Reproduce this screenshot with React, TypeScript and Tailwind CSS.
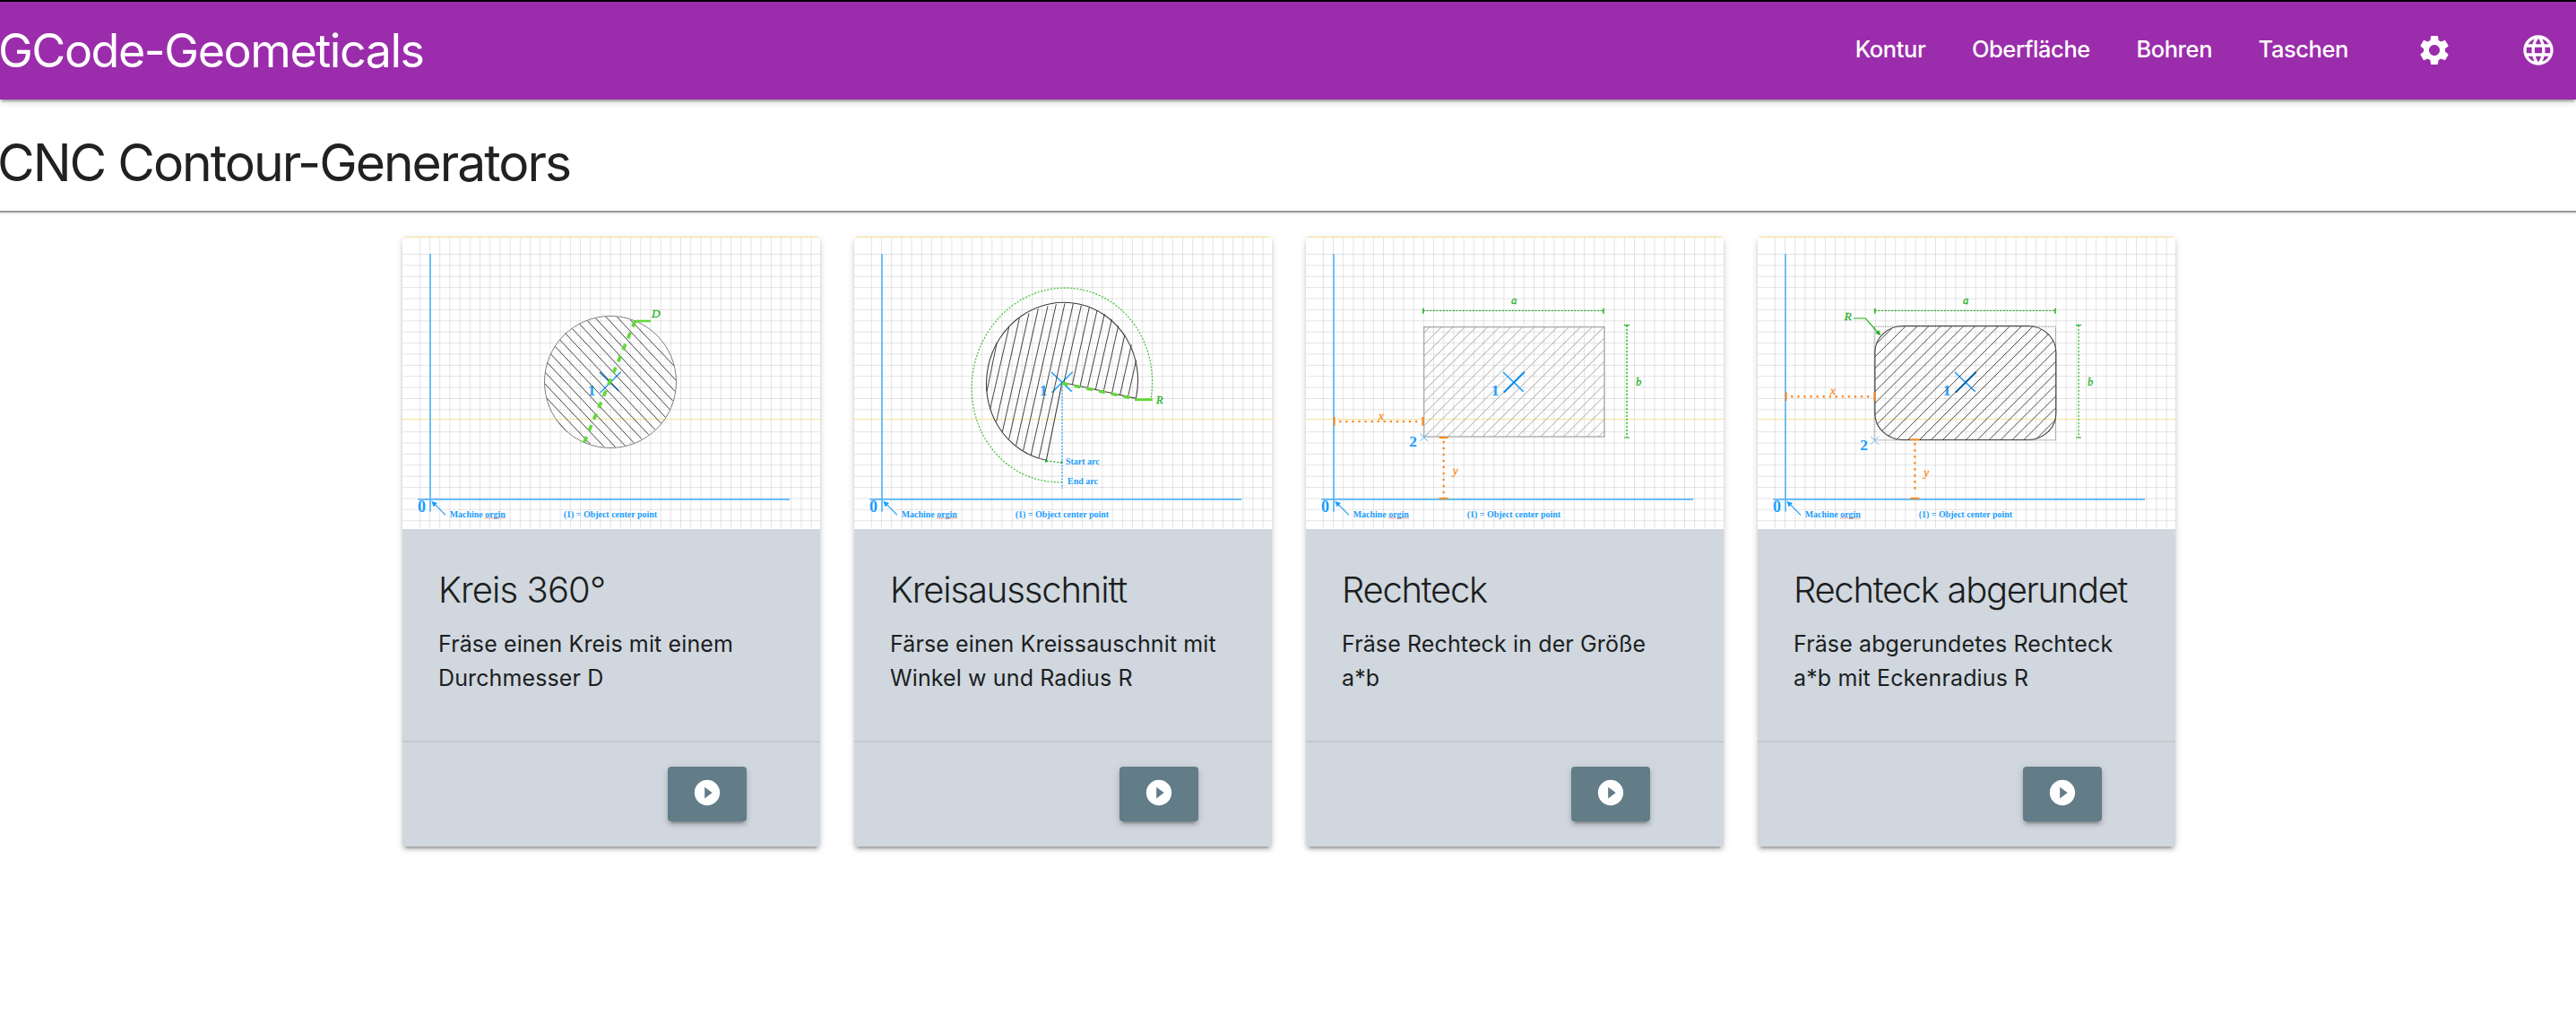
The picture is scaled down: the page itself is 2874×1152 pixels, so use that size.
import React from "react";
import { MdLanguage, MdPlayCircleFilled, MdSettings } from "react-icons/md";

const BLUE = "#1a9dfc";
const GREEN = "#22b11f";
const LIME = "#62d836";
const ORANGE = "#fb8a1c";

const navItems = ["Kontur", "Oberfläche", "Bohren", "Taschen"];

type Segment = [number, number, number, number];

function Segments({ items, stroke, width = 3 }: { items: Segment[]; stroke: string; width?: number }) {
  return (
    <g stroke={stroke} strokeWidth={width}>
      {items.map(([x1, y1, x2, y2], i) => (
        <line key={i} x1={x1} y1={y1} x2={x2} y2={y2} />
      ))}
    </g>
  );
}

function Label({
  x,
  y,
  size = 29.9,
  fill = BLUE,
  italic = false,
  children,
}: {
  x: number;
  y: number;
  size?: number;
  fill?: string;
  italic?: boolean;
  children: React.ReactNode;
}) {
  return (
    <text
      x={x}
      y={y}
      fontSize={size}
      fill={fill}
      stroke={italic ? fill : "none"}
      strokeWidth={italic ? 0.8 : 0}
      fontFamily="'Liberation Serif', 'Times New Roman', serif"
      fontWeight={italic ? 400 : 700}
      fontStyle={italic ? "italic" : "normal"}
    >
      {children}
    </text>
  );
}

const columns = Array.from({ length: 40 }, (_, i) => 85 + i * 33.6);
const rows = Array.from({ length: 25 }, (_, i) => 85.5 + i * 37.15).filter((_, i) => i !== 15);

/* Grid paper, machine axes and captions shared by all drawings */
function Sheet({ children }: { children: React.ReactNode }) {
  return (
    <svg viewBox="27 27 1398 978" className="block h-[326px] w-[466px] bg-white">
      <g stroke="#000000" strokeOpacity="0.11" strokeWidth="3">
        {columns.map((x) => (
          <line key={x} x1={x} y1="27" x2={x} y2="1001" />
        ))}
        {rows.map((y) => (
          <line key={y} x1="27" y1={y} x2="1425" y2={y} />
        ))}
      </g>
      <g stroke="#000000" strokeOpacity="0.12" strokeWidth="1.5" strokeDasharray="2 9">
        <path d="M32 30L120 92M27 36L90 80M1420 30L1335 92M1425 36L1360 80" fill="none" />
      </g>
      <g stroke="#f7e294" strokeWidth="3">
        <line x1="27" y1="28.5" x2="1425" y2="28.5" />
        <line x1="27" y1="637.5" x2="1425" y2="637.5" />
      </g>
      <g stroke="#55b5f7" strokeWidth="5">
        <line x1="120" y1="85" x2="120" y2="947" />
        <line x1="79" y1="905.5" x2="1323" y2="905.5" />
      </g>
      <line x1="171" y1="958" x2="136" y2="923" stroke={BLUE} strokeWidth="3.5" />
      <path d="M124 911L144 918L131 931Z" fill={BLUE} />
      <Label x={78} y={949} size={54}>0</Label>
      <Label x={185} y={966}>Machine orgin</Label>
      <line x1="303" y1="968.5" x2="371" y2="968.5" stroke="#f0504a" strokeWidth="2.5" strokeDasharray="3 2" />
      <Label x={566} y={966}>(1) = Object center point</Label>
      {children}
    </svg>
  );
}

function CenterMark({ dark = false, shade }: { dark?: boolean; shade?: string }) {
  return (
    <>
      <g stroke={BLUE} strokeWidth="4.5">
        <line x1="687" y1="480" x2={dark ? 751 : 755} y2={dark ? 543 : 545} />
        <line x1="689" y1="548" x2="758" y2="479" strokeWidth={shade ? 6 : 4.5} />
      </g>
      {shade && <line x1="690" y1="548" x2="759" y2="480" stroke={shade} strokeWidth="4" />}
      <Label x={648} y={558} size={50}>1</Label>
    </>
  );
}

const circleHatch: Segment[] = [
  [790, 305, 936, 459], [745, 295, 942, 507], [706, 293, 940, 545], [672, 298, 932, 576],
  [645, 307, 922, 605], [619, 318, 908, 632], [595, 334, 893, 652], [572, 350, 872, 672],
  [553, 371, 851, 689], [537, 393, 828, 704], [522, 418, 801, 716], [511, 447, 773, 727],
  [505, 481, 740, 731], [503, 518, 702, 730], [508, 565, 655, 720], [545, 643, 578, 680],
];

function CircleDrawing() {
  return (
    <Sheet>
      <CenterMark dark />
      <Segments items={circleHatch} stroke="#444444" />
      <circle cx="723" cy="513" r="220.5" fill="none" stroke="#808080" strokeWidth="3" />
      <line x1="687" y1="480" x2="751" y2="543" stroke="#0b4f8a" strokeWidth="3" />
      <line x1="806" y1="309" x2="858" y2="309" stroke={LIME} strokeWidth="8" />
      <line x1="806" y1="309" x2="635" y2="716" stroke={LIME} strokeWidth="11" strokeDasharray="21 21" />
      <Label x={861} y={297} size={40} fill={GREEN} italic>D</Label>
    </Sheet>
  );
}

const sectorHatch: Segment[] = [
  [505, 380, 471, 545], [545, 330, 482, 603], [580, 300, 503, 645], [612, 283, 523, 680],
  [643, 268, 545, 704], [675, 259, 569, 725], [703, 253, 593, 742], [732, 250, 619, 757],
  [760, 251, 645, 767], [787, 257, 729, 514], [814, 263, 757, 522], [840, 273, 783, 527],
  [865, 285, 808, 533], [889, 303, 835, 538], [911, 325, 862, 543], [933, 353, 890, 549],
  [955, 388, 917, 555], [971, 440, 944, 560],
];

function SectorDrawing() {
  return (
    <Sheet>
      <CenterMark />
      <Segments items={sectorHatch} stroke="#444444" />
      <path
        d="M723 514L670 775A253 267 12 1 1 970 568Z"
        fill="none"
        stroke="#3a3a3a"
        strokeWidth="3.2"
      />
      <path
        d="M723 848A301 326 12 1 1 1019 575"
        fill="none"
        stroke="#3cc035"
        strokeWidth="3.6"
        strokeDasharray="6 5"
      />
      <path d="M670 777L723 783" stroke={GREEN} strokeWidth="4" strokeDasharray="6 6" />
      <path d="M666 770L677 777L667 784ZM724 775L715 782L724 788Z" fill={GREEN} />
      <line x1="723" y1="516" x2="723" y2="870" stroke="#3aa9fb" strokeWidth="4" strokeDasharray="6 5" />
      <line x1="723" y1="517" x2="968" y2="570" stroke={LIME} strokeWidth="10" strokeDasharray="21 21" />
      <line x1="966" y1="572" x2="1025" y2="572" stroke={LIME} strokeWidth="8" />
      <Label x={1038} y={585} size={37} fill={GREEN} italic>R</Label>
      <Label x={735} y={790}>Start arc</Label>
      <Label x={741} y={855}>End arc</Label>
    </Sheet>
  );
}

function SizeMarks({ soft = false }: { soft?: boolean }) {
  return (
    <>
      <g stroke={GREEN} strokeWidth="3.5">
        <line x1="419" y1="274.5" x2="1023" y2="274.5" strokeWidth="3" strokeDasharray="7 4" />
        <path d="M419.5 266V284M1023 266V284" strokeWidth="4.5" />
        <line x1="1101" y1="323" x2="1101" y2="699" stroke="#4fc74a" strokeWidth={soft ? 4.5 : 5.5} strokeDasharray="7 5" />
        <path d="M1092 323H1110M1092 699H1110" />
      </g>
      <Label x={714} y={251} size={38} fill={GREEN} italic>a</Label>
      <Label x={1131} y={524} size={38} fill={GREEN} italic>b</Label>
    </>
  );
}

/* Dotted distances from the axes to the reference corner */
function OffsetMarks({ rowY, colX, top, labelY, yLabel }: { rowY: number; colX: number; top: number; labelY: number; yLabel: number }) {
  return (
    <>
      <g stroke={ORANGE} strokeLinecap="round" strokeWidth="8">
        <line x1="142" y1={rowY} x2="402" y2={rowY} strokeDasharray="0 21.2" />
        <line x1={colX} y1={top + 15} x2={colX} y2="885" strokeDasharray="0 21" />
      </g>
      <g stroke={ORANGE} strokeWidth="6">
        <path d={`M122 ${rowY - 15}V${rowY + 14}M418 ${rowY - 15}V${rowY + 14}`} />
        <path d={`M${colX - 15} ${top}H${colX + 15}M${colX - 15} 902H${colX + 15}`} />
      </g>
      <Label x={270} y={labelY} size={40} fill={ORANGE} italic>x</Label>
      <Label x={colX + 30} y={yLabel} size={40} fill={ORANGE} italic>y</Label>
    </>
  );
}

function hatchLines(from: number, count: number): Segment[] {
  return Array.from({ length: count }, (_, k) => {
    const sum = from + k * 38.8;
    return [sum - 300, 300, sum - 730, 730] as Segment;
  });
}

function RectDrawing() {
  return (
    <Sheet>
      <clipPath id="rect-area">
        <rect x="422" y="329" width="604" height="367" />
      </clipPath>
      <g clipPath="url(#rect-area)">
        <Segments items={hatchLines(771, 25)} stroke="#a8a8a8" />
      </g>
      <rect x="422" y="329" width="604" height="367" fill="none" stroke="#aaaaaa" strokeWidth="4" />
      <CenterMark shade="#0b84dd" />
      <path d="M409 685L435 711M435 685L409 711" stroke="#5cb8fb" strokeWidth="3" />
      <Label x={373} y={730} size={52}>2</Label>
      <SizeMarks />
      <OffsetMarks rowY={645} colX={488} top={699} labelY={638} yLabel={823} />
    </Sheet>
  );
}

function RoundedDrawing() {
  return (
    <Sheet>
      <clipPath id="rounded-area">
        <rect x="419" y="325.5" width="606" height="381" rx="95" ry="88" />
      </clipPath>
      <CenterMark shade="#0b78c8" />
      <g clipPath="url(#rounded-area)">
        <Segments items={hatchLines(809.5, 24)} stroke="#4c4c4c" />
      </g>
      <rect x="417.5" y="327.5" width="607" height="380" fill="none" stroke="#555555" strokeWidth="2.5" strokeDasharray="3 3" />
      <rect x="419.5" y="325.5" width="606" height="381" rx="95" ry="88" fill="none" stroke="#444444" strokeWidth="3.5" />
      <line x1="689" y1="548" x2="758" y2="479" stroke="#0a4272" strokeWidth="3" />
      <path d="M405 695L432 722M432 695L405 722" stroke="#5cb8fb" strokeWidth="3" />
      <Label x={370} y={740} size={52}>2</Label>
      <path d="M348 300H388L430 348" fill="none" stroke={GREEN} strokeWidth="3.5" />
      <path d="M439 358L421 350L433 339Z" fill={GREEN} />
      <Label x={317} y={307} size={39} fill={GREEN} italic>R</Label>
      <SizeMarks soft />
      <OffsetMarks rowY={562} colX={553} top={706} labelY={556} yLabel={828} />
    </Sheet>
  );
}

const cards = [
  {
    title: "Kreis 360°",
    tracking: "tracking-[-0.9px]",
    lines: ["Fräse einen Kreis mit einem", "Durchmesser D"],
    Drawing: CircleDrawing,
  },
  {
    title: "Kreisausschnitt",
    tracking: "tracking-[-1.15px]",
    lines: ["Färse einen Kreissauschnit mit", "Winkel w und Radius R"],
    Drawing: SectorDrawing,
  },
  {
    title: "Rechteck",
    tracking: "tracking-[-1.3px]",
    lines: ["Fräse Rechteck in der Größe", "a*b"],
    Drawing: RectDrawing,
  },
  {
    title: "Rechteck abgerundet",
    tracking: "tracking-[-1.33px]",
    lines: ["Fräse abgerundetes Rechteck", "a*b mit Eckenradius R"],
    Drawing: RoundedDrawing,
  },
];

const elevation =
  "shadow-[0_6px_2px_-4px_rgba(0,0,0,0.2),0_4px_4px_0_rgba(0,0,0,0.14),0_2px_10px_0_rgba(0,0,0,0.12)]";

function GeneratorCard({ title, tracking, lines, Drawing }: (typeof cards)[number]) {
  return (
    <article className={`flex h-[680px] w-[466px] flex-col overflow-hidden rounded bg-[#d0d7de] ${elevation}`}>
      <Drawing />
      <div className="h-[236px] px-10 pt-11 text-[#1c1e1f]">
        <h2 className={`text-[40px] leading-12 font-light whitespace-nowrap ${tracking}`}>{title}</h2>
        <p className="mt-[17px] text-[25px] leading-[38px] tracking-[0.12px] whitespace-nowrap">
          {lines[0]}
          <br />
          {lines[1]}
        </p>
      </div>
      <div className="flex justify-end border-t-2 border-[#c3cacd] pt-[27px] pr-[82px]">
        <button className={`flex h-[61px] w-[88px] items-center justify-center rounded bg-[#627c88] pb-[3px] text-white ${elevation}`}>
          <MdPlayCircleFilled className="size-[34px]" />
        </button>
      </div>
    </article>
  );
}

export default function App() {
  return (
    <div className="min-h-[1152px] w-full overflow-hidden bg-white font-['Inter',sans-serif]">
      <header className="flex h-[111px] items-center justify-between border-t-2 border-black bg-[#9b2dac] text-white shadow-[0_4px_2px_-2px_rgba(0,0,0,0.2),0_2px_4px_0_rgba(0,0,0,0.16),0_2px_10px_0_rgba(0,0,0,0.14)]">
        <h1 className="-ml-0.5 pt-px text-[52px] leading-16 tracking-[-1.45px]">GCode-Geometicals</h1>
        <nav className="flex items-center pr-[22px] pb-[3px]">
          <div className="mr-[76px] flex gap-[51.5px] text-[25.5px] font-medium tracking-[-0.42px]">
            {navItems.map((item) => (
              <a key={item}>{item}</a>
            ))}
          </div>
          <MdSettings className="mt-0.5 mr-[76px] size-10" />
          <MdLanguage className="mt-0.5 size-10" />
        </nav>
      </header>
      <h1 className="mt-9 -ml-[3px] text-[57px] leading-[70px] tracking-[-2px] text-[#212121]">
        CNC Contour-Generators
      </h1>
      <hr className="mt-[18px] h-1 border-t-2 border-b-2 border-t-[#999999] border-b-[#eeeeee]" />
      <main className="mt-[25px] ml-[449px] flex gap-[38px]">
        {cards.map((card) => (
          <GeneratorCard key={card.title} {...card} />
        ))}
      </main>
    </div>
  );
}
